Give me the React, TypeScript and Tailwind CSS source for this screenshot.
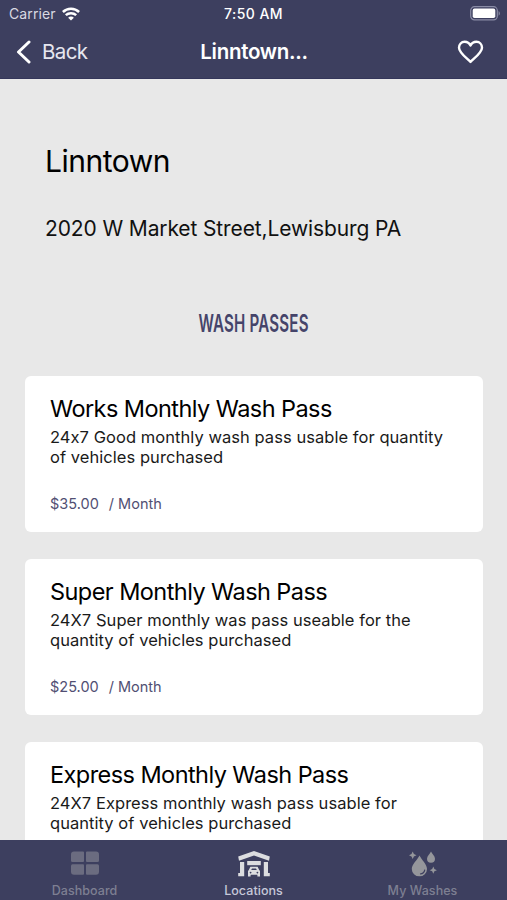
import type { ReactNode } from 'react';

type Pass = { title: string; lines: string[]; price?: string };

const passes: Pass[] = [
  {
    title: 'Works Monthly Wash Pass',
    lines: ['24x7 Good monthly wash pass usable for quantity', 'of vehicles purchased'],
    price: '$35.00',
  },
  {
    title: 'Super Monthly Wash Pass',
    lines: ['24X7 Super monthly was pass useable for the', 'quantity of vehicles purchased'],
    price: '$25.00',
  },
  {
    title: 'Express Monthly Wash Pass',
    lines: ['24X7 Express monthly wash pass usable for', 'quantity of vehicles purchased'],
  },
];

function WifiIcon() {
  return (
    <svg width="18" height="14" viewBox="0 0 18 14" fill="none" stroke="#fff" strokeWidth="2.5">
      <path d="M0.9 5C5.4 0.7 12.6 0.7 17.1 5" />
      <path d="M3.8 8.2C6.7 5.5 11.3 5.5 14.2 8.2" />
      <path d="M9 13.6L6.1 10.7C7.7 9.2 10.3 9.2 11.9 10.7Z" fill="#fff" stroke="none" />
    </svg>
  );
}

function BatteryIcon() {
  return (
    <svg width="31" height="15" viewBox="0 0 31 15">
      <rect x="0.7" y="0.7" width="26.6" height="13.2" rx="3.8" fill="none" stroke="#8a8ca6" strokeWidth="1.2" />
      <rect x="2.7" y="2.6" width="22.6" height="9.4" rx="1.8" fill="#fff" />
      <path d="M28.6 5V9.8C30.3 9 30.3 5.8 28.6 5Z" fill="#8a8ca6" />
    </svg>
  );
}

function DashboardIcon() {
  return (
    <svg width="28" height="25" viewBox="0 0 28 25" fill="#6b6c80">
      <path d="M3 0.5H12Q13 0.5 13 1.5V10Q13 11 12 11H1.5Q0 11 0 9.5V3.5Q0 0.5 3 0.5Z" />
      <path d="M16 0.5H25Q28 0.5 28 3.5V9.5Q28 11 26.5 11H16Q15 11 15 10V1.5Q15 0.5 16 0.5Z" />
      <path d="M1.5 13.2H12Q13 13.2 13 14.2V22.8Q13 23.8 12 23.8H3Q0 23.8 0 20.8V14.7Q0 13.2 1.5 13.2Z" />
      <path d="M16 13.2H26.5Q28 13.2 28 14.7V20.8Q28 23.8 25 23.8H16Q15 23.8 15 22.8V14.2Q15 13.2 16 13.2Z" />
    </svg>
  );
}

function LocationsIcon() {
  return (
    <svg width="34" height="28" viewBox="0 0 34 28" fill="#dcdde0">
      <path d="M17 0L32.8 5.6L32 9.8L17 4.6L2 9.8L1.2 5.6Z" />
      <path d="M3 11H7.2V25.2H1.2V22H3Z" />
      <path d="M26.8 11H31V22H32.8V25.2H26.8Z" />
      <rect x="10.2" y="10" width="13.6" height="4.2" />
      <path
        fillRule="evenodd"
        d="M13.4 15.8H20.6L22.2 18.9L23 19.9V25.4H20.4V23.7H13.6V25.4H11V19.9L11.8 18.9ZM15 17.4L14.2 19.1H19.8L19 17.4ZM13.6 20.8A0.8 0.8 0 1 0 13.61 20.8ZM20.4 20.8A0.8 0.8 0 1 0 20.41 20.8Z"
      />
    </svg>
  );
}

function WashesIcon() {
  return (
    <svg width="28" height="26" viewBox="0 0 28 26" fill="#95969b">
      <path d="M10.5 4.5C12.5 8.6 18 13.6 18 17.9A7.6 7.4 0 0 1 2.8 17.9C2.8 13.6 8.5 8.6 10.5 4.5Z" />
      <path d="M11 23C13.7 22.7 15.5 20.9 15.8 18.6" fill="none" stroke="#3d3f5f" strokeWidth="1.2" />
      <path d="M22 0.6C23 2.9 26 5 26 7.8A4 4 0 0 1 18 7.8C18 5 21 2.9 22 0.6Z" />
      <path d="M3.7 0.5L4.9 3L7.5 4.2L4.9 5.4L3.7 8L2.5 5.4L0 4.2L2.5 3Z" />
      <path d="M24.3 15.6L25.4 18.1L27.9 19.2L25.4 20.3L24.3 22.8L23.2 20.3L20.7 19.2L23.2 18.1Z" />
    </svg>
  );
}

function PassCard({ pass }: { pass: Pass }) {
  return (
    <div className="h-[156.5px] shrink-0 rounded-[6px] bg-white pl-[25px] pt-[18px] whitespace-nowrap">
      <h2 className="text-[23.5px] leading-[30px] tracking-[-0.56px] text-black">{pass.title}</h2>
      <div className="mt-[3px] text-[16.5px] leading-[20.3px] tracking-[0.05px] text-[#1a1a1a]">
        {pass.lines.map((line) => (
          <p key={line}>{line}</p>
        ))}
      </div>
      {pass.price && (
        <div className="mt-[26.5px] flex gap-[10px] text-[14.5px] leading-5 text-[#514f73]">
          <span>{pass.price}</span>
          <span>/ Month</span>
        </div>
      )}
    </div>
  );
}

function Tab({ icon, label, className }: { icon: ReactNode; label: string; className: string }) {
  return (
    <div className={`flex flex-1 flex-col items-center pt-[11px] ${className}`}>
      <div className="flex h-[28px] items-start">{icon}</div>
      <span className="mt-[4px] text-[12.5px] font-medium leading-4 tracking-[0.05px]">{label}</span>
    </div>
  );
}

export default function App() {
  return (
    <div className="flex h-[900px] w-[507px] flex-col overflow-hidden bg-[#e8e8e8] font-['Inter',sans-serif] [font-feature-settings:'calt'_0]">
      <header className="h-[79px] shrink-0 border-b border-[#34365a] bg-[#3d3f5f] text-white">
        <div className="grid h-[27px] grid-cols-3 items-center px-[9px] text-[13.5px]">
          <div className="flex items-center gap-[6px] text-[#d9d9e2]">
            <span className="text-[14px] tracking-[0.1px]">Carrier</span>
            <WifiIcon />
          </div>
          <span className="text-center text-[14px] font-medium tracking-[0.45px]">7:50 AM</span>
          <div className="-mr-[3px] flex justify-end"><BatteryIcon /></div>
        </div>
        <div className="grid h-[50px] grid-cols-3 items-center pl-[16px] pr-[23px]">
          <div className="flex items-center gap-[11px]">
            <svg width="15" height="24" viewBox="0 0 15 24" fill="none" stroke="#fff" strokeWidth="3" strokeLinecap="round" strokeLinejoin="round">
              <path d="M13 2L2.5 12L13 22" />
            </svg>
            <span className="pt-[1px] text-[20.5px] tracking-[-0.6px] text-[#e6e6ef]">Back</span>
          </div>
          <span className="pl-[8px] pt-[1px] text-center text-[20.5px] font-semibold tracking-[-0.28px]">Linntown...</span>
          <div className="flex justify-end">
            <svg width="27" height="24" viewBox="0 0 27 24" fill="none" stroke="#fff" strokeWidth="2.4" strokeLinejoin="round">
              <path d="M13.5 22C10 18.3 2 12.6 2 7.7C2 4.3 4.4 1.8 7.6 1.8C10.2 1.8 12.4 3.2 13.5 5.6C14.6 3.2 16.8 1.8 19.4 1.8C22.6 1.8 25 4.3 25 7.7C25 12.6 17 18.3 13.5 22Z" />
            </svg>
          </div>
        </div>
      </header>

      <main className="flex min-h-0 flex-1 flex-col overflow-hidden pl-[25px] pr-[24.5px] pt-[62px]">
        <h1 className="pl-[20px] text-[30px] leading-[40px] tracking-[-0.5px] text-black">Linntown</h1>
        <p className="mt-[34px] pl-[20px] text-[21px] leading-[28px] tracking-[-0.12px] text-[#111]">2020 W Market Street,Lewisburg PA</p>
        <div className="mt-[66px] flex h-[30px] justify-center">
          <span className="origin-center scale-x-[0.63] whitespace-nowrap text-[24px] font-semibold leading-[30px] tracking-[0.3px] text-[#45446a]">WASH PASSES</span>
        </div>
        <div className="mt-[36.5px] flex flex-col gap-[26.8px]">
          {passes.map((pass) => (
            <PassCard key={pass.title} pass={pass} />
          ))}
        </div>
      </main>

      <nav className="flex h-[60px] shrink-0 bg-[#3d3f5f]">
        <Tab icon={<DashboardIcon />} label="Dashboard" className="text-[#7e7f92]" />
        <Tab icon={<LocationsIcon />} label="Locations" className="text-[#c6c8d9]" />
        <Tab icon={<WashesIcon />} label="My Washes" className="text-[#7e7f92]" />
      </nav>
    </div>
  );
}
